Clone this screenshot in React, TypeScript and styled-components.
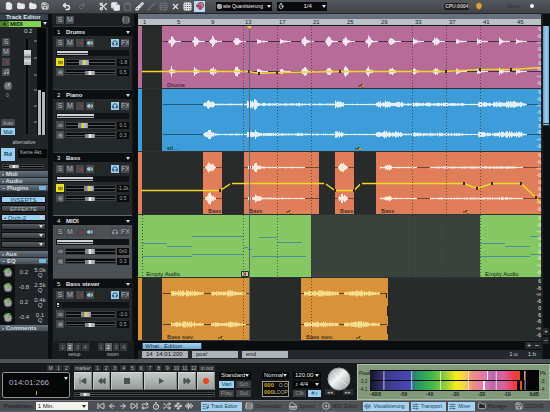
import React from 'react';
import styled, { createGlobalStyle, css } from 'styled-components';
import {
  File, Folder, FolderOpen, Save, Undo2, Redo2, Scissors, Copy, Clipboard, Brush, Slash, Rows3, X, Grid3x3,
  Magnet, Volume2, SkipBack, SkipForward, Rewind, FastForward, ArrowLeft, ArrowRight, Repeat, Timer,
  Shuffle, Waypoints, Shield, ListMusic, Piano, SlidersHorizontal, AudioLines, Disc, Music, Headphones,
} from 'lucide-react';

const Global = createGlobalStyle`
  *, *::before, *::after { box-sizing: border-box; }
  body { margin: 0; background: #15181a; font-family: "Liberation Sans", Arial, sans-serif; font-size: 6px; line-height: 7px; color: #e4e6e8; }
  button, select, input { font: inherit; color: inherit; margin: 0; padding: 0; border: 0; border-radius: 0; }
  svg { display: block; flex: none; }
`;

const blue = '#9bd0f2';

const Page = styled.div`
  min-height: 100vh; display: flex; flex-direction: column; overflow: hidden;
`;

/* ---------- top toolbar ---------- */
const Toolbar = styled.header`
  height: 14px; display: flex; align-items: center; padding: 0 16px 1px 3px;
  background: linear-gradient(#55575c, #414348); border-bottom: 1px solid #25272a;
`;
const ToolGroup = styled.div<{ $gap?: number }>`
  display: flex; align-items: center; gap: ${p => p.$gap ?? 1}px; margin-right: 11px;
`;
const Tool = styled.button<{ $dim?: boolean; $on?: boolean }>`
  width: 11px; height: 11px; display: grid; place-items: center; background: ${p => (p.$on ? '#b5dcf6' : 'none')};
  color: ${p => (p.$dim ? '#6d6f74' : '#e6e7e8')};
`;
const Combo = styled.label<{ $width: number; $small?: boolean }>`
  width: ${p => p.$width}px; height: 9px; display: flex; align-items: center; gap: 1px; padding: 0 1px;
  background: #08090a; margin-right: 5px; color: #eceeef; font-size: ${p => (p.$small ? 5 : 6)}px;
`;
const Picker = styled.select`
  appearance: none; background: none; flex: 1; min-width: 0; height: 9px; line-height: 9px; outline: none;
`;
const Caret = styled.span`
  border: 2px solid transparent; border-top: 3px solid #d8dadc; border-bottom: 0; flex: none;
`;
const Push = styled.span`flex: 1;`;
const CpuBox = styled.span`
  background: #1d1e20; color: #c6c8c2; padding: 0 1px; border-radius: 2px; font-size: 5px; font-weight: bold; margin-right: 6px;
`;
const Faint = styled.span`color: #303236; margin: 0 10px 0 24px; font-size: 5px;`;
const Led = styled.span`width: 4px; height: 4px; border-radius: 50%; background: #f2f3f4;`;

/* ---------- workspace ---------- */
const Workspace = styled.main`
  flex: 1; display: grid; grid-template-columns: 48px 86px minmax(0, 1fr) 9px; background: #0b0d0e;
`;

/* inspector */
const Inspector = styled.aside`background: #202427; overflow: hidden;`;
const PanelTitle = styled.h2`
  margin: 0; height: 6px; font-size: 6px; line-height: 6px; padding-left: 6px; color: #dfe6ea; background: #34404a; white-space: nowrap;
`;
const TrackPick = styled.div`
  height: 7px; display: grid; grid-template-columns: 9px 32px 1fr; align-items: center; justify-items: stretch; background: #101214; margin-bottom: 1px;
`;
const TrackNo = styled.span`background: #4b8035; color: #0c1408; text-align: center; line-height: 6px;`;
const TrackTag = styled.span`background: #83cf58; color: #0b1406; padding-left: 1px; font-weight: bold; line-height: 6px;`;
const CaretCell = styled.span`display: grid; place-items: center;`;
const Strip = styled.div`height: 107px; display: grid; grid-template-columns: 17px 20px 9px; position: relative;`;
const StripButtons = styled.div`display: flex; flex-direction: column; gap: 2px; padding: 10px 0 0 2px; align-items: flex-start;`;
const Key = styled.button<{ $on?: boolean; $wide?: boolean; $red?: boolean; $yellow?: boolean }>`
  width: ${p => (p.$wide ? 14 : 8)}px; height: 8px; display: grid; place-items: center; font-size: 7px; line-height: 8px; white-space: nowrap; overflow: hidden;
  background: ${p => (p.$on ? blue : p.$yellow ? '#e9dd28' : '#45494d')};
  color: ${p => (p.$on ? '#173246' : p.$red ? '#96333a' : p.$yellow ? '#343000' : '#b2b6b9')};
  ${p => p.$wide && css`font-size: 5px; line-height: 6px; height: 7px;`}
`;
const KnobBox = styled.div`padding: 4px 0 0 2px; font-size: 5px; color: #9da1a4;`;
const KnobText = styled.div`padding-left: 4px;`;
const SideKeys = styled.div`position: absolute; left: 1px; bottom: 0; display: grid; gap: 2px;`;
const FaderColumn = styled.div`padding-left: 7px; line-height: 6px; color: #c9ccce;`;
const FaderDrawing = styled.svg`margin-top: 4px;`;
const MeterColumn = styled.div`
  background: #070808; display: grid; grid-template-columns: 3px 3px; column-gap: 1px; align-items: end; padding: 0 1px;
`;
const MeterBar = styled.span<{ $h: number }>`height: ${p => p.$h}px; background: #b4b8ba;`;
const Caption = styled.div`text-align: center; line-height: 7px; height: 12px; padding-top: 4px; font-size: 5px; color: #bfc3c5;`;
const ReadRow = styled.div`display: flex; gap: 3px; padding: 1px; height: 16px;`;
const ReadKey = styled.button`width: 14px; height: 13px; background: ${blue}; color: #1d4059; font-weight: bold;`;
const Readout = styled.span`flex: 1; height: 9px; background: #090a0b; font-size: 5px; line-height: 7px; white-space: nowrap; color: #b8bbbd; padding-left: 2px; margin-top: 1px;`;
const SectionHead = styled.h3`
  margin: 0; height: 7px; display: flex; align-items: center; gap: 2px; padding: 0 2px; font-size: 6px; line-height: 6px; font-weight: bold;
  color: #d9dee2; background: linear-gradient(#66727d, #434c54); border-bottom: 1px solid #262b2f;
`;
const Toggle = styled.button`width: 7px; height: 4px; background: #76b3dd; margin-left: auto;`;
const Slots = styled.div`padding: 4px 2px 3px 1px; display: grid; gap: 2px;`;
const Slot = styled.button<{ $on?: boolean; $center?: boolean }>`
  height: 7px; display: flex; align-items: center; justify-content: ${p => (p.$center ? 'center' : 'space-between')};
  padding: 0 2px; font-size: 6px; line-height: 6px; border: 1px solid #0d0f10;
  background: ${p => (p.$on ? blue : 'linear-gradient(#555c61, #363b3f)')}; color: ${p => (p.$on ? '#1a3a50' : '#aeb2b5')};
`;
const EqRow = styled.div`
  height: 15px; display: grid; grid-template-columns: 16px 16px 1fr; align-items: center; font-size: 6px; line-height: 5px; color: #c2c5c7;
`;
const KnobCell = styled.span`background: #0e1011; height: 15px; display: grid; place-items: center; margin-right: 1px;`;
const EqValue = styled.span`text-align: center; white-space: pre-line;`;

/* slider */
const Range = styled.input<{ $h?: number; $thumb?: string }>`
  appearance: none; width: 100%; min-width: 0; height: ${p => p.$h ?? 7}px; background: #0a0b0c; border: 1px solid #393d40; outline: none; display: block;
  &::-webkit-slider-runnable-track { height: 1px; background: #515558; }
  &::-webkit-slider-thumb {
    appearance: none; width: 10px; height: ${p => (p.$h ?? 7) - 2}px; margin-top: -${p => Math.floor(((p.$h ?? 7) - 3) / 2)}px;
    background: linear-gradient(90deg, #85888a 3px, #cfd1d2 4px, ${p => p.$thumb ?? '#e8e8e8'} 4px 6px, #b5b7b8 6px 8px, #85888a);
  }
`;
const HSlide = styled.div`padding: 1px 4px 2px 2px; height: 8px;`;

/* track list */
const TrackList = styled.section`background: #222629; border-left: 4px solid #0c0e0f; display: flex; flex-direction: column;`;
const ListHead = styled.div`height: 12px; display: flex; align-items: center; gap: 2px; padding: 0 4px; background: #1d2022;`;
const TrackCard = styled.article<{ $sel?: boolean }>`
  height: 63px; background: ${p => (p.$sel ? '#4c5155' : '#23282b')}; border-left: 1px solid #101213; border-right: 2px solid #101213;
`;
const TrackName = styled.h3<{ $sel?: boolean }>`
  margin: 0 0 3px; height: 10px; display: flex; align-items: center; padding: 1px 2px 0 4px; font-size: 6px; line-height: 8px; font-weight: bold;
  background: #0c0e0f; border-top: 1px solid ${p => (p.$sel ? '#63686c' : '#34393c')};
`;
const Num = styled.span`width: 9px; font-weight: normal;`;
const KeyRow = styled.div`display: flex; gap: 2px; padding: 0 3px; height: 8px; margin-bottom: 3px;`;
const Level = styled.div`height: 6px; margin: 0 3px 2px; background: #111314; padding: 1px;`;
const LevelFill = styled.div<{ $w: number }>`
  height: 4px; width: ${p => p.$w}%; background: linear-gradient(#d0d3d4 2px, #2a2d2f 2px 3px, #a9adaf 3px);
`;
const SlideRow = styled.div`display: grid; grid-template-columns: 8px minmax(0, 1fr) 12px; gap: 1px; padding: 0 3px; align-items: center; margin-bottom: 2px;`;
const Val = styled.span`background: #0a0b0c; height: 7px; font-size: 5px; line-height: 7px; text-align: center; color: #a4a8aa;`;
const ListFoot = styled.div`flex: 1; display: flex; gap: 8px; padding: 2px 6px 0 7px; background: #191c1e;`;
const SetGroup = styled.div`flex: 1; text-align: center; font-size: 5px; line-height: 6px; color: #b4b7b9;`;
const SetKeys = styled.div`display: flex; height: 8px;`;
const SetKey = styled.button<{ $on?: boolean }>`flex: 1; background: ${p => (p.$on ? '#5f6467' : '#33383b')}; color: ${p => (p.$on ? '#eee' : '#8a8e90')}; border-right: 1px solid #1b1e20; line-height: 7px;`;

/* arranger */
const Arranger = styled.section`display: flex; flex-direction: column; background: #1a1d1f; margin-left: 4px; min-width: 0;`;
const Overview = styled.div`height: 5px; background: #667080;`;
const Ruler = styled.div`
  height: 7px; display: grid; grid-template-columns: 5fr repeat(11, 34fr) 24fr; background: #bcc1c8; color: #22262c; font-size: 6px; line-height: 7px; border-bottom: 1px solid #17191a; overflow: hidden;
`;
const Lanes = styled.div`position: relative;`;
const Lane = styled.div<{ $cols: string }>`
  position: relative; height: 63px; display: grid; grid-template-columns: ${p => p.$cols}; background: #292a2a; border-bottom: 1px solid #2b3236;
`;
const Clip = styled.div<{ $color: string }>`
  background: ${p => p.$color}; min-width: 0; overflow: hidden; display: flex; align-items: flex-end; justify-content: space-between;
  font-size: 6px; line-height: 6px; color: #17191a; white-space: nowrap;
  &:not(:empty) { padding: 0 2px 0 5px; }
`;
const Overlay = styled.svg`position: absolute; inset: 0; width: 100%; height: 100%; pointer-events: none;`;
const Scale = styled.div`
  position: absolute; right: 0; top: 0; bottom: 1px; display: flex; flex-direction: column; justify-content: space-around;
  align-items: flex-end; font-size: 5px; line-height: 5px; color: #f1ecf0;
`;
const ScrollRow = styled.div`height: 9px; display: flex; align-items: center; background: #0b0d0e; padding: 1px 0 1px 4px;`;
const ScrollThumb = styled.div`width: 15%; height: 6px; background: linear-gradient(#a9d6f3, #6fa8d0); color: #163247; line-height: 6px; padding-left: 2px; white-space: nowrap; border: solid #23485f; border-width: 0 1px;`;
const Zoom = styled.button`width: 8px; height: 7px; background: #23282b; color: #d5d8da; font-size: 8px; line-height: 6px;`;
const PosRow = styled.div`height: 9px; display: flex; align-items: center; gap: 4px; padding: 0 5px 1px 4px; background: #24282c;`;
const PosField = styled.input`width: 46px; height: 7px; background: #aeb2b9; color: #16181b; font-size: 6px; line-height: 7px; padding-left: 4px; outline: none;`;
const SmallNote = styled.span`font-size: 6px; color: #c8cbcd; margin-left: 6px;`;
const VScroll = styled.div`display: flex; flex-direction: column; background: #0d0f10; border-left: 2px solid #1d2022; padding: 12px 1px 15px 0;`;
const VThumb = styled.div`height: 100px; background: linear-gradient(90deg, #5f9cc5, #9dd0f0 50%, #6da8d0); border-bottom: 3px double #1c3c52;`;
const VZoom = styled(Zoom)`width: 6px; font-size: 6px; line-height: 7px; margin-top: 2px;`;

/* ---------- transport ---------- */
const Transport = styled.footer`
  height: 41px; display: flex; border-top: 4px solid #4e5357; background: #16191b; padding: 1px 0 0 2px; gap: 4px; overflow: hidden;
`;
const TimeBlock = styled.div`width: 68px;`;
const TinyRow = styled.div<{ $end?: boolean }>`
  display: flex; justify-content: ${p => (p.$end ? 'flex-end' : 'space-between')}; gap: 1px; height: 8px; padding-top: 1px;
`;
const TinyKey = styled.button<{ $w?: number }>`width: ${p => p.$w ?? 7}px; height: 6px; background: #2c3033; color: #b6babc; font-size: 5px; line-height: 6px;`;
const TimeBox = styled.div`
  position: relative; height: 26px; border: 1px solid #8f9392; border-radius: 2px; background: #050606; padding: 4px 1px 0 6px;
  font-size: 8px; line-height: 11px; color: #aeb6c0; display: flex; justify-content: space-between; align-items: flex-start;
`;
const Tick = styled.span`position: absolute; left: 50%; bottom: 2px; width: 1px; height: 4px; background: #e39a2c;`;
const DeckBlock = styled.div`width: 141px;`;
const Deck = styled.div`display: grid; grid-template-columns: 18fr 17fr 32fr 32fr 18fr 18fr; gap: 1px; height: 18px;`;
const DeckKey = styled.button<{ $rec?: boolean }>`
  display: grid; place-items: center; border: 1px solid; border-color: #d9dcdb #848a88 #6c7270 #c8cccb;
  background: linear-gradient(#c3c8c6, #969d9a); color: ${p => (p.$rec ? '#e8461f' : '#4b5250')};
`;
const Shuttle = styled.div`margin-top: 2px;`;
const Cols = styled.div<{ $w: number }>`width: ${p => p.$w}px; display: grid; grid-template-columns: 1fr 1fr; grid-auto-rows: 7px; gap: 2px; padding-top: 8px; align-content: start;`;
const Spacer = styled.span`width: 3px;`;
const MiniCombo = styled.label`grid-column: 1 / -1; display: flex; align-items: center; background: #060707; padding: 0 2px; height: 7px;`;
const MiniPick = styled(Picker)`height: 7px; line-height: 7px;`;
const MiniKey = styled.button<{ $on?: boolean }>`height: 7px; background: ${p => (p.$on ? blue : '#3b4043')}; color: ${p => (p.$on ? '#1c4059' : '#8f9395')}; line-height: 7px; overflow: hidden;`;
const Lcd = styled.div`
  grid-column: 1 / -1; grid-row: span 2; border: 1px solid #9c9d92; background: #0b0b08; color: #d5a12b; font-size: 6px; line-height: 7px; font-weight: bold;
  display: grid; grid-template-columns: 10px 1fr; padding: 0 1px;
`;
const LcdDim = styled.span`color: #b9b6a2; font-weight: normal; font-size: 5px; text-align: right;`;
const Jog = styled.div`width: 28px; padding-top: 3px; display: flex; flex-direction: column; align-items: center;`;
const JogKeys = styled.div`display: flex; justify-content: space-between; width: 28px; margin-top: -2px;`;
const MeterPanel = styled.div`
  flex: 1; min-width: 120px; background: #819a7b; border: 1px solid #aebfa7; display: grid; grid-template-columns: 12px minmax(0, 1fr) 10px;
  color: #19231a; font-size: 5px; line-height: 7px; padding-top: 5px;
`;
const Peak = styled.div`display: flex; flex-direction: column; gap: 1px; padding-left: 1px; white-space: nowrap;`;
const Bars = styled.div`display: grid; grid-template-rows: 9px 9px; gap: 1px; background: #050505; height: 21px; padding: 1px 0;`;
const BarLine = styled.div<{ $end: number; $mark: number }>`
  background: linear-gradient(90deg, transparent ${p => p.$end}%, #050505 ${p => p.$end}% ${p => p.$end + 2}%, #f24a24 ${p => p.$end + 2}% ${p => p.$end + 3}%, #050505 ${p => p.$end + 3}%),
    linear-gradient(90deg, transparent ${p => p.$mark}%, #fff ${p => p.$mark}% ${p => p.$mark + 1}%, transparent ${p => p.$mark + 1}%),
    linear-gradient(90deg, #17142c, #3d3a8c 10%, #4747b4 23%, #24906a 27%, #42ba47 37%, #8ccb3c 44%, #f3ee1c 51%, #f9d34c 56%, #ef8b82 61%, #e278b0 68%, #b968ad 73%, #d9629e 79%, #ee3c4c 85%, #e8451f 89%);
`;
const Db = styled.div`display: flex; justify-content: space-between; line-height: 6px; font-weight: bold;`;
const MeterLines = styled.div`position: relative;`;

/* ---------- status bar ---------- */
const Status = styled.nav`
  height: 13px; display: flex; align-items: center; background: #4c4f53; border-top: 1px solid #777b7f; border-bottom: 2px solid #596570; padding: 0 2px 0 4px; gap: 2px; color: #17191b;
`;
const WhitePick = styled.select`width: 51px; height: 8px; line-height: 8px; background: #f3f3ee; appearance: none; padding-left: 2px; color: #222;`;
const PickWrap = styled.span`display: flex; align-items: center; background: #f3f3ee; padding-right: 2px; margin-right: 6px;`;
const DarkCaret = styled(Caret)`border-top-color: #333; margin-left: -5px;`;
const Tab = styled.button<{ $on?: boolean }>`
  flex: 1 1 auto; height: 9px; display: flex; align-items: center; gap: 2px; padding: 0 1px; white-space: nowrap; font-size: 5px;
  background: ${p => (p.$on ? '#a5d2f1' : '#515457')}; color: ${p => (p.$on ? '#1b3d55' : '#202326')};
`;
const IconStrip = styled.div`display: flex; width: 103px; flex: none;`;
const Mark = styled.button`width: 11px; height: 10px; background: none; color: #d9dbdd; display: grid; place-items: center;`;

/* ---------- waveform data ---------- */
type Seg = [number, number, number, number];
const noise = (n: number) => {
  const v = Math.sin(n * 12.9898) * 43758.5453;
  return v - Math.floor(v);
};
/** Vertical strokes for a list of [from, to, amplitude at start, amplitude at end]. */
const wave = (cy: number, segs: Seg[], seed: number) =>
  segs.map(([a, b, s, e]) => {
    let d = '';
    for (let x = a; x <= b; x += 1) {
      const t = b === a ? 0 : (x - a) / (b - a);
      const h = Math.max(0.5, (s + (e - s) * t) * (0.5 + 0.8 * noise(x + seed)));
      d += `M${x - 137.5} ${(cy + 0.5 - h).toFixed(1)}v${(2 * h).toFixed(1)}`;
    }
    return d;
  }).join('');

const hits = [171, 195, 212, 236, 304, 328, 345, 368, 391, 435];
const soft = [258, 281, 414, 457, 478, 500, 517];
const drums: Seg[] = [
  ...hits.flatMap((x): Seg[] => [[x - 3, x, 0.6, 5], [x + 1, x + 4, 4, 1], [x + 5, x + 9, 0.6, 0.4]]),
  ...soft.flatMap((x): Seg[] => [[x - 1, x + 3, 3, 1], [x + 4, x + 9, 0.8, 0.4]]),
];
const piano: Seg[] = [
  [203, 209, 1, 4], [210, 215, 4, 1], [216, 246, 0.8, 0.8], [247, 254, 3, 4], [255, 260, 4, 1], [261, 296, 1.4, 1], [297, 302, 2, 1],
  [303, 334, 0.8, 0.8], [335, 343, 3, 2], [344, 375, 0.6, 0.6], [376, 386, 2, 3.5], [387, 402, 2.4, 2.4], [403, 412, 1, 1],
  [413, 463, 1.7, 1.3], [464, 477, 0.6, 0.6], [478, 492, 3, 1], [493, 520, 2, 3], [521, 526, 2, 0.5],
];
const bass: Seg[] = [
  [205, 209, 1, 5], [210, 215, 5, 1], [248, 250, 2, 1], [252, 256, 2, 4], [257, 262, 3, 1], [263, 304, 0.8, 0.6],
  [338, 342, 1, 5], [343, 347, 4, 1], [380, 384, 1, 1], [385, 391, 2, 2.5], [392, 416, 0.7, 0.6], [430, 500, 0.8, 1], [501, 522, 1.2, 0.6],
];
const steel: Seg[] = [
  [171, 187, 2, 2.6], [188, 203, 3, 1.2], [211, 226, 1.8, 2], [227, 236, 3, 2], [237, 245, 1.6, 1],
  [304, 320, 2, 2.4], [321, 338, 2.6, 1.3], [344, 361, 1.5, 3], [362, 379, 2.4, 1],
];
const points = (list: number[][]) => list.map(([x, y]) => `${x - 138},${y + 0.5}`).join(' ');
const drumLine = [[142, 45], [249, 45], [259, 47], [277, 46], [340, 45], [446, 45], [480, 43], [511, 43], [541, 41]];
const bassLine = [[141, 38], [220, 38], [231, 31], [325, 31], [335, 38], [354, 38], [361, 31], [464, 31], [477, 36], [492, 31], [521, 31], [536, 45], [541, 51]];

const Wave = ({ segs, color, base, rows = [15, 45], line, from, to }: {
  segs: Seg[]; color: string; base: string; rows?: number[]; line?: number[][]; from: number[]; to: number[];
}) => (
  <Overlay viewBox="0 0 403 62" preserveAspectRatio="none" aria-hidden="true">
    {rows.map((cy, i) => (
      <g key={cy}>
        {from.map((x, n) => <path key={x} d={`M${x - 138} ${cy + 0.5}H${to[n] - 138}`} stroke={base} strokeWidth="1" />)}
        <path d={wave(cy, segs, i * 0.13)} stroke={color} strokeWidth="1" />
      </g>
    ))}
    {line && <polyline points={points(line)} fill="none" stroke="#f2d722" strokeWidth="1.4" />}
    {line && line.slice(1, -1).map(([x, y]) => <rect key={x} x={x - 139} y={y - 1} width="2" height="3" fill="#3c2a0c" />)}
  </Overlay>
);

const notes = [
  [142, 167, 28], [167, 192, 31], [192, 243, 21], [192, 243, 39], [142, 192, 41], [244, 248, 32], [248, 252, 34], [259, 277, 22], [277, 302, 27], [252, 306, 41],
  [480, 505, 28], [505, 530, 31], [480, 530, 41], [530, 541, 21], [530, 541, 39],
];

const ClipIcon = () => (
  <svg width="7" height="5" viewBox="0 0 7 5" aria-hidden="true">
    <path d="M0 3h2l2-2v3h2" fill="none" stroke="#4b380e" /><path d="M4 2h2v2H4z" fill="#d8a62c" />
  </svg>
);
const DbScale = () => <Scale aria-hidden="true">{['6', '-6', '-∞', '-6', '0', '6', '-6', '-∞', '-6'].map((t, i) => <span key={i}>{t}</span>)}</Scale>;

/* ---------- track list parts ---------- */
type Track = { name: string; level: number; vol: number; pan: number; volText: string; panText: string; hot?: boolean; sel?: boolean; auto?: boolean };
const tracks: Track[] = [
  { name: 'Drums', level: 44, vol: 34, pan: 48, volText: '-1.8', panText: '0.5', hot: true, auto: true },
  { name: 'Piano', level: 52, vol: 30, pan: 48, volText: '0.1', panText: '0.3', auto: true },
  { name: 'Bass', level: 50, vol: 46, pan: 48, volText: '-1.2k', panText: '0.5', hot: true },
  { name: 'MIDI', level: 50, vol: 48, pan: 48, volText: '0x0', panText: '0.3', sel: true },
  { name: 'Bass stever', level: 3, vol: 39, pan: 48, volText: '-3.0', panText: '0.5', auto: true },
];

const TrackItem = ({ t, n }: { t: Track; n: number }) => (
  <TrackCard $sel={t.sel}>
    <TrackName $sel={t.sel}><Num>{n}</Num>{t.name}<Push /><Caret /></TrackName>
    <KeyRow>
      <Key>S</Key><Key>M</Key>
      <Key $red aria-label="Record">●</Key>
      <Key aria-label="Monitor"><Volume2 size={6} color="#a9d4dc" fill="#a9d4dc" strokeWidth={3} /></Key>
      <Push />
      <Key $on={!t.sel} aria-label="Automation"><Headphones size={6} strokeWidth={3} /></Key>
      <Key>FX</Key>
    </KeyRow>
    <Level><LevelFill $w={t.level} /></Level>
    <SlideRow>
      <Key $yellow={t.hot} aria-label="Volume"><Volume2 size={5} strokeWidth={3} /></Key>
      <Range type="range" defaultValue={t.vol} $thumb={t.auto || t.hot ? '#dfd43c' : undefined} aria-label={`${t.name} volume`} />
      <Val>{t.volText}</Val>
    </SlideRow>
    <SlideRow>
      <Key aria-label="Pan"><SlidersHorizontal size={5} strokeWidth={3} /></Key>
      <Range type="range" defaultValue={t.pan} $h={6} aria-label={`${t.name} pan`} />
      <Val>{t.panText}</Val>
    </SlideRow>
  </TrackCard>
);

const Dial = ({ green }: { green?: boolean }) => (
  <svg width="12" height="12" viewBox="0 0 12 12" aria-hidden="true">
    <circle cx="6" cy="6" r="4" fill={green ? '#a2a7a5' : '#737779'} stroke="#4d5254" />
    {green && <path d="M2 5A4.500 4.500 0 0 1 8 2" fill="none" stroke="#66b648" strokeWidth="1.5" />}
    <path d="M6 6L8 2.500" stroke={green ? '#52a838' : '#d4d7d8'} />
  </svg>
);

const toolsA = [File, Folder, FolderOpen, Save];
const toolsC = [Scissors, Copy, Clipboard, Brush, Slash, Rows3, X, Grid3x3];
const bars = ['', '1', '5', '9', '13', '17', '21', '25', '29', '33', '37', '41', '45'];

export default function App() {
  return (
    <Page>
      <Global />
      <Toolbar>
        <ToolGroup>{toolsA.map((I, i) => <Tool key={i} aria-label="File tool"><I size={8} strokeWidth={3} fill={i < 3 ? 'currentColor' : 'none'} /></Tool>)}</ToolGroup>
        <ToolGroup $gap={4}>
          <Tool aria-label="Undo"><Undo2 size={9} strokeWidth={4} /></Tool>
          <Tool $dim aria-label="Redo"><Redo2 size={8} strokeWidth={3} /></Tool>
        </ToolGroup>
        <ToolGroup>
          {toolsC.map((I, i) => <Tool key={i} $dim={[2, 4, 5].includes(i)} aria-label="Edit tool"><I size={9} strokeWidth={3} fill={i === 1 ? 'currentColor' : 'none'} /></Tool>)}
          <Tool $on aria-label="Snap"><Magnet size={8} strokeWidth={4} color="#ad4057" /></Tool>
        </ToolGroup>
        <Combo $width={56} $small><Grid3x3 size={5} strokeWidth={3} />
          <Picker aria-label="Quantize mode"><option>wie Quantisierung</option></Picker><Caret />
        </Combo>
        <Combo $width={50}><Timer size={6} strokeWidth={3} /><Push />
          <Picker aria-label="Quantize value"><option>1/4</option></Picker><Caret />
        </Combo>
        <Push />
        <CpuBox>CPU:0004</CpuBox>
        <Shield size={8} fill="#d9a53a" color="#a9822e" />
        <Faint>Menü</Faint><Led />
      </Toolbar>

      <Workspace>
        <Inspector>
          <PanelTitle>Track Editor</PanelTitle>
          <TrackPick><TrackNo>4</TrackNo><TrackTag>MIDI</TrackTag><CaretCell><Caret /></CaretCell></TrackPick>
          <Strip>
            <div>
              <StripButtons><Key>S</Key><Key>M</Key><Key $red aria-label="Record">●</Key><Key aria-label="Monitor"><Music size={6} strokeWidth={3} /></Key></StripButtons>
              <KnobBox><Dial /><KnobText>0</KnobText></KnobBox>
            </div>
            <FaderColumn>0.2
              <FaderDrawing width="13" height="97" viewBox="0 0 13 97" role="img" aria-label="Volume fader">
                <path d="M3 1v95" stroke="#050606" strokeWidth="2" />
                <path d="M10 3h3M10 20h3M10 37h3M10 52h3M10 68h3M10 84h3" stroke="#94989a" />
                <path d="M0 12h7v15H0z" fill="#b7babb" /><path d="M0 19h7" stroke="#333" /><path d="M0 13h7M0 15h7M0 23h7" stroke="#f0f0f0" />
              </FaderDrawing>
            </FaderColumn>
            <MeterColumn><MeterBar $h={45} /><MeterBar $h={43} /></MeterColumn>
            <SideKeys><Key $wide>Auto</Key><Key $wide $on>Midi</Key></SideKeys>
          </Strip>
          <Caption>alternative</Caption>
          <ReadRow><ReadKey>Rd</ReadKey><Readout>Keine Akt.</Readout></ReadRow>
          <HSlide><Range type="range" defaultValue={20} $h={5} aria-label="Automation" /></HSlide>
          <SectionHead>› Midi</SectionHead>
          <SectionHead>› Audio</SectionHead>
          <SectionHead>– Plugins<Toggle aria-label="Plugins on" /></SectionHead>
          <Slots>
            <Slot $on $center>INSERTS</Slot><Slot $center>EFFEKTE</Slot>
            <Slot $on>• Orch-2<Caret /></Slot><Slot aria-label="Slot 2"><Push /><Caret /></Slot>
            <Slot aria-label="Slot 3"><Push /><Caret /></Slot><Slot aria-label="Slot 4"><Push /><Caret /></Slot>
          </Slots>
          <SectionHead>› Aux</SectionHead>
          <SectionHead>– EQ<Toggle aria-label="EQ on" /></SectionHead>
          {[['0.2', '5.0k\nQ'], ['-0.8', '2.5k\nQ'], ['0.2', '0.4k\nQ'], ['-0.4', '0.1\nQ']].map(([a, b], i) => (
            <EqRow key={i}><KnobCell><Dial green /></KnobCell><EqValue>{a}</EqValue><EqValue>{b}</EqValue></EqRow>
          ))}
          <SectionHead>› Comments</SectionHead>
        </Inspector>

        <TrackList>
          <ListHead><Key>S</Key><Key>M</Key><Push /><Rows3 size={8} color="#8d9193" strokeWidth={3} /></ListHead>
          {tracks.map((t, i) => <TrackItem key={t.name} t={t} n={i + 1} />)}
          <ListFoot>
            {['setup', 'zoom'].map(s => (
              <SetGroup key={s}><SetKeys>{[1, 2, 3, 4].map(k => <SetKey key={k} $on={k === 2}>{k}</SetKey>)}</SetKeys>{s}</SetGroup>
            ))}
          </ListFoot>
        </TrackList>

        <Arranger>
          <Overview />
          <Ruler>{bars.map((b, i) => <span key={i}>{b}</span>)}</Ruler>
          <Lanes>
            <Lane $cols="4fr 20fr 379fr">
              <Clip $color="#b66b99" /><span /><Clip $color="#b66b99"><span>Drums</span><ClipIcon /><span /></Clip>
              <Wave segs={drums} color="#f3e8ef" base="#4c2f47" line={drumLine} from={[163]} to={[541]} /><DbScale />
            </Lane>
            <Lane $cols="4fr 20fr 379fr">
              <Clip $color="#3e9dd9" /><span /><Clip $color="#3e9dd9"><span>stl...</span><ClipIcon /><span /></Clip>
              <Wave segs={piano} color="#e3f0f8" base="#20597e" from={[163]} to={[541]} /><DbScale />
            </Lane>
            <Lane $cols="4fr 61fr 19fr 22fr 75fr 16fr 19fr 22fr 165fr">
              <Clip $color="#e07e5b" /><span /><Clip $color="#e07e5b">Bass</Clip><span /><Clip $color="#e07e5b"><span>Bass</span><ClipIcon /><span /></Clip><span />
              <Clip $color="#e07e5b">Bass</Clip><span /><Clip $color="#e07e5b"><span>Bass</span><ClipIcon /><span /></Clip>
              <Wave segs={bass} color="#fbe9e0" base="#7f4836" rows={[15, 46]} line={bassLine} from={[203, 244, 335, 380]} to={[222, 319, 354, 541]} /><DbScale />
            </Lane>
            <Lane $cols="173fr 169fr 61fr">
              <Clip $color="#84c763"><span>&nbsp; Empty Audio</span>
                <svg width="8" height="6" viewBox="0 0 8 6" aria-hidden="true"><path d="M.5.5h7v5h-7z" fill="#b8ceb0" stroke="#26351e" /><path d="M2 3l3-2v4z" fill="#b12f28" /></svg><span />
              </Clip>
              <Clip $color="#3a433c" /><Clip $color="#84c763">Empty Audio</Clip>
              <Overlay viewBox="0 0 403 62" preserveAspectRatio="none" aria-hidden="true">
                {notes.map(([a, b, y], i) => <path key={i} d={`M${a - 138} ${y + 0.5}H${b - 138}`} stroke="#4a8e96" />)}
              </Overlay><DbScale />
            </Lane>
            <Lane $cols="4fr 20fr 88fr 51fr 87fr 153fr">
              <Clip $color="#d8923a" /><span /><Clip $color="#d8923a"><span>Bass stev.</span><ClipIcon /><span /></Clip><span /><Clip $color="#d8923a"><span>Bass stev.</span><ClipIcon /><span /></Clip>
              <Wave segs={steel} color="#f5dc8c" base="#5e3f1c" rows={[15, 46]} from={[163, 301]} to={[249, 387]} /><DbScale />
            </Lane>
            <Overlay viewBox="0 0 403 315" preserveAspectRatio="none" aria-hidden="true">
              <path d="M105.5 0V315M139.5 0V315M173.5 0V315M274.5 0V315M308.5 0V315M342.5 0V315" stroke="#282c30" strokeOpacity=".65" strokeDasharray="1 2" />
              <path d="M4.500 189v63" stroke="#34512a" strokeDasharray="1 2" />
              <path d="M248.500 267v5M249.500 280v10M249.500 300v8" stroke="#2c1d0c" />
              <path d="M111.5 0V315" stroke="#59696f" /><path d="M109 0h5l-2.500 3z" fill="#e9d83b" />
            </Overlay>
          </Lanes>
          <ScrollRow><ScrollThumb>What.. Edition</ScrollThumb><Push /><Zoom>+</Zoom><Zoom>−</Zoom></ScrollRow>
          <PosRow>
            <PosField aria-label="Position" defaultValue="14  14:01:200" /><PosField aria-label="Length" defaultValue="pos/" /><PosField aria-label="End" defaultValue="end" />
            <Push /><SmallNote>1:u</SmallNote><SmallNote>1:b</SmallNote>
          </PosRow>
        </Arranger>
        <VScroll><VThumb /><Push /><VZoom>+</VZoom><VZoom>−</VZoom></VScroll>
      </Workspace>

      <Transport>
        <TimeBlock>
          <TinyRow $end><TinyKey>M</TinyKey><TinyKey>1</TinyKey><TinyKey>2</TinyKey></TinyRow>
          <TimeBox>014:01:266<Caret /><Tick /></TimeBox>
        </TimeBlock>
        <DeckBlock>
          <TinyRow><TinyKey $w={18}>marker</TinyKey>{Array.from({ length: 12 }, (_, i) => <TinyKey key={i}>{i + 1}</TinyKey>)}<TinyKey $w={16}>in out</TinyKey></TinyRow>
          <Deck>
            <DeckKey aria-label="To start"><SkipBack size={8} fill="currentColor" /></DeckKey>
            <DeckKey aria-label="Rewind"><Rewind size={8} fill="currentColor" /></DeckKey>
            <DeckKey aria-label="Stop"><svg width="6" height="6"><path d="M0 0h6v6H0z" fill="currentColor" /></svg></DeckKey>
            <DeckKey aria-label="Play"><svg width="6" height="6"><path d="M1 0l5 3-5 3z" fill="currentColor" /></svg></DeckKey>
            <DeckKey aria-label="Forward"><FastForward size={8} fill="currentColor" /></DeckKey>
            <DeckKey $rec aria-label="Record"><svg width="8" height="8"><circle cx="4" cy="4" r="3" fill="currentColor" /></svg></DeckKey>
          </Deck>
          <Shuttle><Range type="range" defaultValue={4} $h={5} aria-label="Scrub" /></Shuttle>
        </DeckBlock>
        <Cols $w={32}>
          <MiniCombo><MiniPick aria-label="Mode"><option>Standard</option></MiniPick><Caret /></MiniCombo>
          <MiniKey $on>Vari</MiniKey><MiniKey>Scr</MiniKey><MiniKey>Play</MiniKey><MiniKey>Sol</MiniKey>
        </Cols>
        <Spacer />
        <Cols $w={27}>
          <MiniCombo><MiniPick aria-label="Record mode"><option>Normal</option></MiniPick><Caret /></MiniCombo>
          <Lcd><span>000</span><LcdDim>O O</LcdDim><span>000</span><LcdDim>LOOP</LcdDim></Lcd>
        </Cols>
        <Cols $w={28}>
          <MiniCombo><MiniPick aria-label="Tempo"><option>120.00</option></MiniPick><Caret /></MiniCombo>
          <MiniCombo><MiniPick aria-label="Meter"><option>♪ 4/4</option></MiniPick><Caret /></MiniCombo>
          <MiniKey>Clk</MiniKey><MiniKey $on>#♪</MiniKey>
        </Cols>
        <Jog>
          <svg width="24" height="24" viewBox="0 0 24 24" role="img" aria-label="Jog wheel">
            <defs><linearGradient id="jog" x1="0" y1="0" x2="1" y2="1"><stop offset="0" stopColor="#8f9292" /><stop offset=".45" stopColor="#f3f4f3" /><stop offset="1" stopColor="#8d908f" /></linearGradient></defs>
            <circle cx="12" cy="12" r="11" fill="url(#jog)" stroke="#9fa2a2" /><path d="M12 12L5 4M12 12l8 6" stroke="#fff" strokeOpacity=".5" />
          </svg>
          <JogKeys><TinyKey $w={10}>◂◂</TinyKey><TinyKey $w={10}>▸▸</TinyKey></JogKeys>
        </Jog>
        <MeterPanel>
          <Peak><span>Peak</span><span>-3.2</span><span>-4.1</span></Peak>
          <div>
            <MeterLines>
              <Bars><BarLine $end={89} $mark={69} /><BarLine $end={87} $mark={67} /></Bars>
              <Overlay viewBox="0 0 170 21" preserveAspectRatio="none" aria-hidden="true"><path d="M14 1v19M42 1v19M71 1v19M99 1v19M127 1v19M156 1v19" stroke="#fff" strokeOpacity=".7" /></Overlay>
            </MeterLines>
            <Db>{['-60/0', '-50', '-40', '-30', '-20', '-10', '0dB'].map(v => <span key={v}>{v}</span>)}</Db>
          </div>
          <Peak><span>Pk</span><span>-3</span><span>-4</span></Peak>
        </MeterPanel>
      </Transport>

      <Status>
        <label htmlFor="pos-set">Positionen:</label>
        <PickWrap><WhitePick id="pos-set"><option>1 Min.</option></WhitePick><DarkCaret /></PickWrap>
        <IconStrip>
          {[SkipBack, ArrowLeft, ArrowRight, SkipForward, Repeat, Timer, Shuffle, Waypoints, AudioLines].map((I, i) => <Mark key={i} aria-label="Locate"><I size={8} strokeWidth={3} /></Mark>)}
        </IconStrip>
        <Tab $on><ListMusic size={7} />Track Editor</Tab>
        <Tab><Rows3 size={8} color="#ddd" />Objekteditor</Tab>
        <Tab><Piano size={8} color="#ddd" />Spuren</Tab>
        <Tab><Disc size={8} color="#ddd" />MIDI Editor</Tab>
        <Tab $on><AudioLines size={7} />Visualisierung</Tab>
        <Tab $on><SlidersHorizontal size={7} />Transport</Tab>
        <Tab $on><SlidersHorizontal size={7} />Mixer</Tab>
        <Tab><Folder size={8} color="#ddd" fill="#222" />Manager</Tab>
        <Tab><Save size={8} color="#ddd" />CD/DVD</Tab>
      </Status>
    </Page>
  );
}
